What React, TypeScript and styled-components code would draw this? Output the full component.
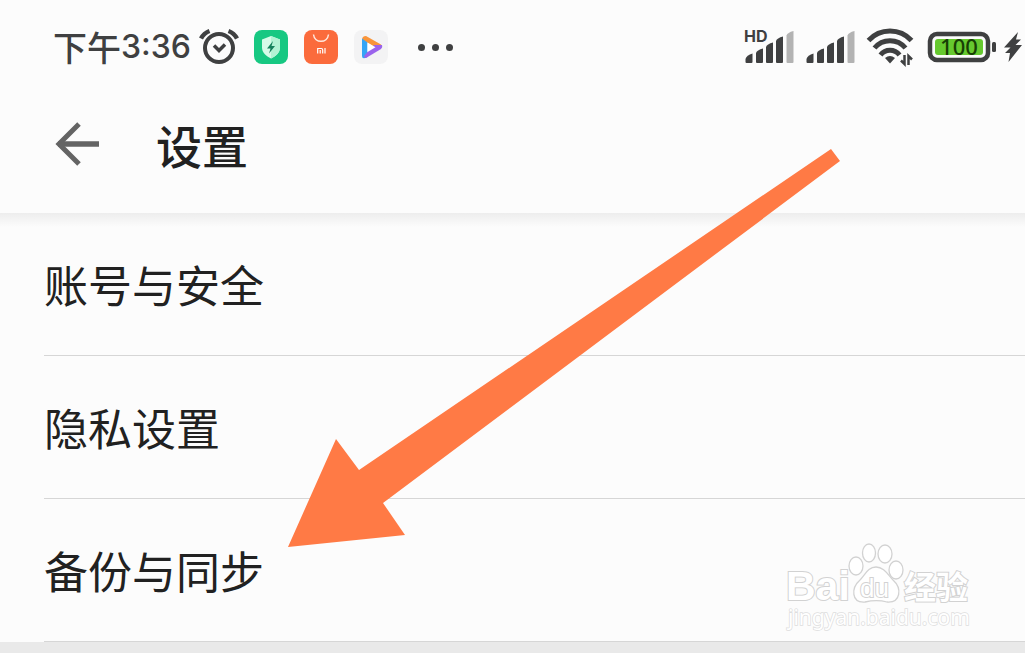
import React from "react";
import styled, { createGlobalStyle } from "styled-components";

const ink = "#3f4041";

const GlobalStyle = createGlobalStyle`
  * { box-sizing: border-box; }
  body {
    margin: 0;
    background: #e9e9e9;
    font-family: "Noto Sans CJK SC", "Noto Sans", sans-serif;
  }
`;

const Page = styled.div`
  position: relative;
  min-height: 100vh;
  overflow: hidden;
`;

const StatusBar = styled.div`
  display: flex;
  align-items: center;
  justify-content: space-between;
  height: 94px;
  padding: 0 3px 0 53px;
  background: #fcfcfc;
  color: ${ink};
`;

const Group = styled.div<{ $gap: number }>`
  display: flex;
  align-items: center;
  gap: ${(p) => p.$gap}px;
`;

const Clock = styled.time`
  display: flex;
  align-items: center;
  font-size: 34px;
  font-weight: 500;
  line-height: 40px;
`;

const Digits = styled.span`
  font-family: Inter, sans-serif;
  font-size: 32px;
  font-weight: 500;
`;

const Icon = styled.svg`
  display: block;
  flex: none;
  overflow: visible;
`;

const Dots = styled.div`
  display: flex;
  gap: 7px;
  padding-left: 14px;
`;

const Dot = styled.i`
  width: 7px;
  height: 7px;
  border-radius: 50%;
  background: ${ink};
`;

const Header = styled.header`
  display: flex;
  align-items: center;
  gap: 56px;
  height: 119px;
  padding: 0 54px 20px;
  background: #fcfcfc;
`;

const BackButton = styled.button`
  width: 46px;
  height: 46px;
  padding: 0;
  border: 0;
  background: none;
  cursor: pointer;
`;

const Title = styled.h1`
  margin: 0;
  color: #212121;
  font-size: 46px;
  font-weight: 500;
  line-height: 64px;
`;

const List = styled.nav`
  padding-left: 44px;
  background: linear-gradient(#ededed, #fcfcfc 14px);
`;

const Row = styled.a`
  display: flex;
  align-items: center;
  height: 143px;
  border-bottom: 1px solid #d6d6d6;
  color: #212121;
  font-size: 44px;
  line-height: 64px;
  text-decoration: none;
`;

const Pointer = styled.svg`
  position: absolute;
  top: 148px;
  left: 287px;
  pointer-events: none;
`;

const Watermark = styled.svg`
  position: absolute;
  right: 52px;
  bottom: 18px;
  pointer-events: none;
`;

const AlarmIcon = () => (
  <Icon width="39" height="40" viewBox="0 0 39 40" fill="none" stroke={ink} strokeWidth="4">
    <circle cx="20" cy="21" r="14" />
    <path d="M2 11.500Q5 6 10.500 4M29.500 4Q35 6 38 11.500" strokeWidth="4.500" />
    <path d="M15 18.500l5 5 6-6" strokeWidth="3.500" />
  </Icon>
);

const SecurityIcon = () => (
  <Icon width="34" height="34" viewBox="0 0 34 34">
    <rect width="34" height="34" rx="8" fill="#17c882" />
    <path d="M17 6l9 3.500v8c0 5-4 8.500-9 11-5-2.500-9-6-9-11v-8z" fill="#d6fbe8" />
    <path d="M17 6l9 3.500v8c0 5-4 8.500-9 11z" fill="#b2f3d4" />
    <path d="M19 11l-6 7.500h3.500L15 23.500l6-7.500h-3.500z" fill="#15815c" />
  </Icon>
);

const StoreIcon = () => (
  <Icon width="34" height="34" viewBox="0 0 34 34" fill="none" stroke="#fff">
    <rect width="34" height="34" rx="8" fill="#fb6b3c" stroke="none" />
    <path d="M9.500 4.500c1 9 14 9 15 0" stroke="#ffe9df" strokeWidth="1.500" />
    <path d="M13.700 23.500v-5h3.600q1.400 0 1.400 1.400v3.600M16.200 20v3.500M21 18v5.500" strokeWidth="1.200" />
  </Icon>
);

const VideoIcon = () => (
  <Icon width="34" height="34" viewBox="0 0 34 34">
    <rect width="34" height="34" rx="8" fill="#f3f3f4" />
    <path d="M8 10q0-4 4-4l15 8.500q1.500 1.500 1 3l-7 0L13 12.500z" fill="#f9953a" />
    <path d="M8 8.500l5.500 4V27q-5.500 3-5.500-1z" fill="#35a5f5" />
    <path d="M20 15l8 0q1 2.500-1 4L12 28q-2 0-2-2l3.500-4z" fill="#9a63ec" />
    <path d="M13.500 12.500v9.500l8-4.800z" fill="#fff" />
  </Icon>
);

const SignalIcon = ({ label }: { label?: string }) => (
  <Icon width={label ? 51 : 48} height="36" viewBox={label ? "-4 1 51 36" : "-1 1 48 36"} fill={ink}>
    <path d="M-.5 34v-3q1-4 7-5.500V34q0 1-1 1h-5q-1 0-1-1z" />
    <path d="M10 34V25q1-3 7-4.500V34q0 1-1 1h-5q-1 0-1-1z" />
    <path d="M20 34V19q1-3 7-4.500V34q0 1-1 1h-5q-1 0-1-1z" />
    <path d="M30 34V13q1-3 7-4.500V34q0 1-1 1h-5q-1 0-1-1z" />
    <path d="M40.500 34V7.500q1-3 7-4.500V34q0 1-1 1h-5q-1 0-1-1z" fill="#b3b3b3" />
    {label && (
      <text x="-2" y="14" fontFamily="Inter, sans-serif" fontSize="16" fontWeight="700">
        {label}
      </text>
    )}
  </Icon>
);

const WifiIcon = () => (
  <Icon width="46" height="38" viewBox="1 1 46 38" fill="none" stroke={ink} strokeWidth="5">
    <path d="M2.500 13.500A29 29 0 0 1 45.500 13.500" />
    <path d="M8.500 21A20 20 0 0 1 39.500 21" />
    <path d="M14.500 28A12 12 0 0 1 33.500 28" />
    <path d="M19 31q5-4 10 0l-5 5.500z" fill={ink} stroke="none" />
    <path d="M38.500 28v9l-3.500-3.500M42.500 38v-9l3.500 3.500" strokeWidth="2.500" />
  </Icon>
);

const BatteryIcon = () => (
  <Icon width="68" height="32" viewBox="0 0 68 32">
    <rect x="2" y="3" width="58" height="26" rx="7" fill="none" stroke={ink} strokeWidth="4.500" />
    <rect x="7" y="8" width="48" height="16" rx="3" fill="#66c92f" />
    <rect x="64" y="11" width="4" height="10" rx="1.500" fill={ink} />
    <text x="31" y="24" textAnchor="middle" fontFamily="'Noto Sans', sans-serif" fontSize="22" fontWeight="500" fill="#173f05">
      100
    </text>
  </Icon>
);

const BoltIcon = () => (
  <Icon width="18" height="30" viewBox="0 0 18 30" fill={ink}>
    <path d="M14 0L0 15.500h6.500L1 21l5 0-1.500 9L18 13h-6.500L17 7.500h-5z" />
  </Icon>
);

const rows = ["账号与安全", "隐私设置", "备份与同步"];

export default function App() {
  return (
    <>
      <GlobalStyle />
      <Page>
        <StatusBar>
          <Group $gap={16}>
            <Group $gap={8}>
              <Clock>
                下午<Digits>3:36</Digits>
              </Clock>
              <AlarmIcon />
            </Group>
            <SecurityIcon />
            <StoreIcon />
            <VideoIcon />
            <Dots>
              <Dot />
              <Dot />
              <Dot />
            </Dots>
          </Group>
          <Group $gap={15}>
            <Group $gap={13}>
              <SignalIcon label="HD" />
              <SignalIcon />
              <WifiIcon />
            </Group>
            <Group $gap={8}>
              <BatteryIcon />
              <BoltIcon />
            </Group>
          </Group>
        </StatusBar>
        <Header>
          <BackButton type="button" aria-label="返回">
            <Icon width="46" height="46" viewBox="0 0 46 46" fill="none" stroke="#646464">
              <path d="M25 3L5 23l20 20" strokeWidth="5" />
              <path d="M4 23h41" strokeWidth="5.500" />
            </Icon>
          </BackButton>
          <Title>设置</Title>
        </Header>
        <List>
          {rows.map((name) => (
            <Row key={name} href="#">
              {name}
            </Row>
          ))}
        </List>
        <Pointer width="554" height="400" viewBox="0 0 554 400" aria-hidden="true">
          <path d="M1 399L49 291l23 31L544 1l9 12L96 355l22 32z" fill="#ff7a45" />
        </Pointer>
        <Watermark width="188" height="94" viewBox="0 0 188 94" fill="#fff" stroke="#d2d2d2">
          <g fontWeight="700" paintOrder="stroke" strokeWidth="2">
            <text x="1" y="59" fontSize="41" fontFamily="'Liberation Sans', sans-serif">
              Bai
            </text>
            <text x="119" y="58" fontSize="32" fontFamily="'Noto Sans CJK SC', sans-serif">
              经验
            </text>
          </g>
          <g strokeWidth="1.300">
            <ellipse cx="84" cy="12" rx="6.500" ry="9" />
            <ellipse cx="100" cy="13" rx="7" ry="9" />
            <ellipse cx="71" cy="25" rx="7" ry="9" />
            <ellipse cx="111" cy="29" rx="7" ry="9" />
            <path d="M91 26c-8 0-11 8-16 13-9 8-9 23 5 22 8-2 15-2 22 0 14 1 15-14 6-22-5-5-9-13-17-13z" />
          </g>
          <text x="75" y="56" fontFamily="'Liberation Sans', sans-serif" fontSize="26" paintOrder="stroke" strokeWidth="2">
            du
          </text>
          <text x="3" y="84" fontFamily="'Noto Sans', sans-serif" fontSize="21" stroke="#dedede" paintOrder="stroke" strokeWidth="1.500">
            jingyan.baidu.com
          </text>
        </Watermark>
      </Page>
    </>
  );
}
